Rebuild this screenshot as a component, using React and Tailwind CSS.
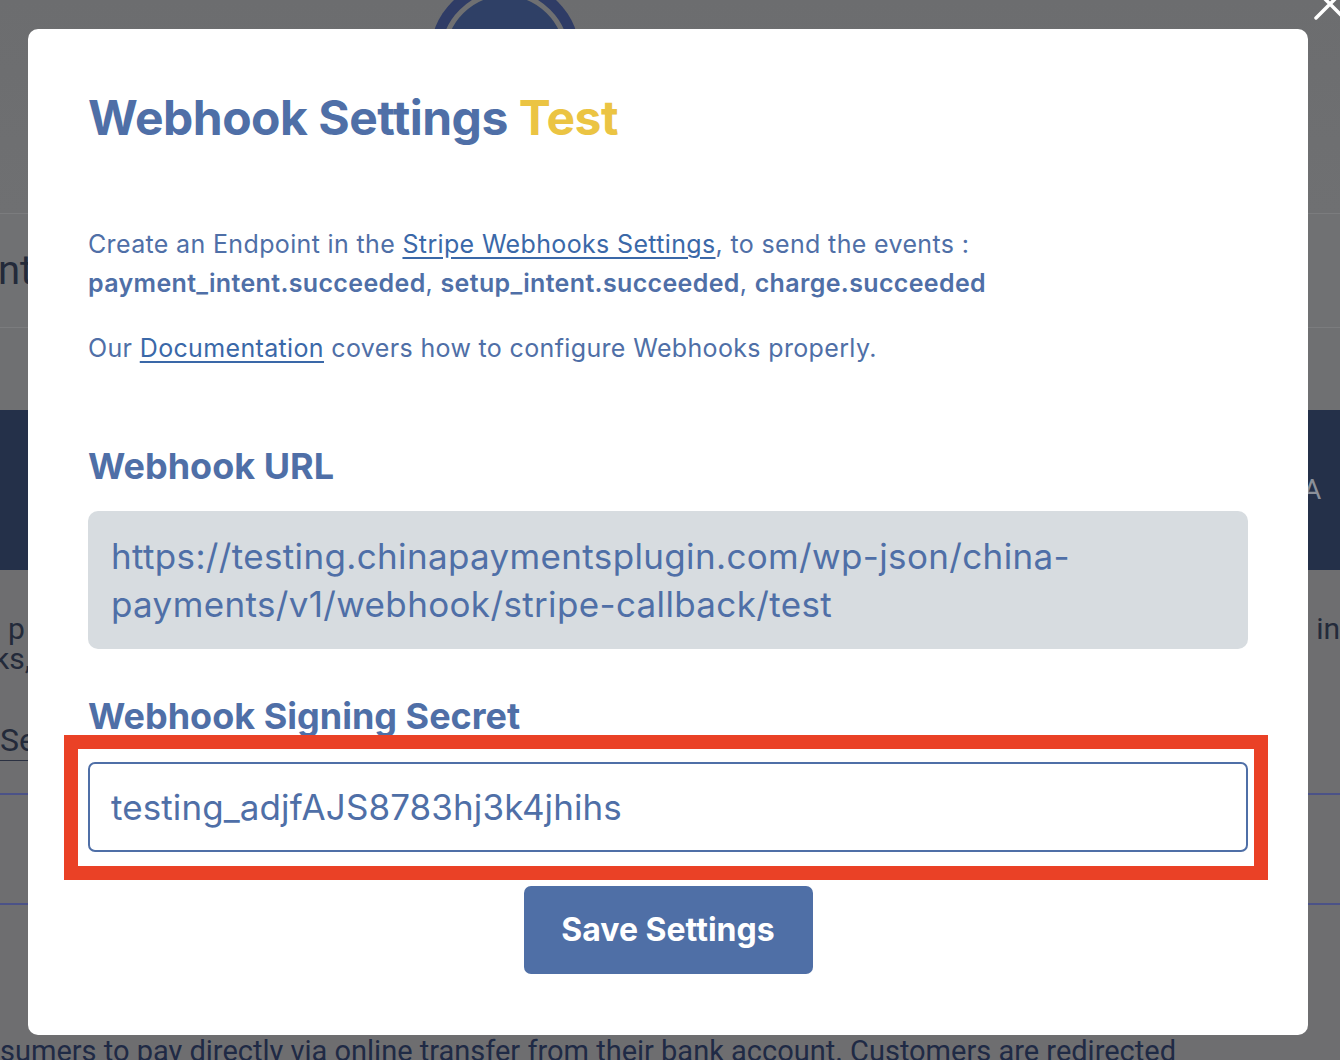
import React from 'react';

const BLUE = 'text-[#4f6fa7]';

function BackgroundPage() {
    return (
        <div className="flex flex-col w-full bg-[#6e6e70] text-[#232a3a]" style={{ fontFamily: 'Roboto, "Liberation Sans", sans-serif' }}>
            {/* Header with logo */}
            <div className="relative h-[214px] bg-gradient-to-b from-[#6c6d6f] to-[#6f7072] border-b border-[#7b7c7e]">
                <div className="absolute left-[430px] -top-[20px] w-[150px] h-[150px] rounded-full bg-[#2f3c66] flex items-center justify-center">
                    <div className="w-[128px] h-[128px] rounded-full border-[5px] border-[#6f7072] bg-[#2f4066]" />
                </div>
            </div>
            <div className="h-[114px] bg-[#707173] border-b border-[#7b7c7e] flex items-center">
                <span className="text-[40px] leading-none -ml-[2px]">nt</span>
            </div>
            <div className="h-[82px] bg-[#6f7072]" />
            {/* Navy band */}
            <div className="h-[160px] bg-[#243049] flex items-center justify-end pr-[18px]">
                <span className="text-[28px] text-[#8b909a] tracking-wide">A</span>
            </div>
            <div className="flex justify-between pt-[44px]">
                <div className="text-[30px]">
                    <div className="pl-[8px] leading-[30px]">p</div>
                    <div className="-ml-[6px] leading-[30px]">ks,</div>
                </div>
                <div className="text-[30px] leading-[30px]">in</div>
            </div>
            <div className="mt-[46px] w-[28px] border-b border-[#2b3142]">
                <span className="text-[32px] leading-[40px]">Se</span>
            </div>
            <div className="mt-[32px] h-[2px] bg-[#4b5288]" />
            <div className="mt-[108px] h-[2px] bg-[#4b5288]" />
            <div className="mt-[130px] whitespace-nowrap text-[29px] leading-[32px] text-[#1f2a45]">
                sumers to pay directly via online transfer from their bank account. Customers are redirected
            </div>
        </div>
    );
}

export default function App() {
    return (
        <div className="relative w-full h-[1060px] overflow-hidden">
            <BackgroundPage />

            {/* Close button of the overlay */}
            <svg className="absolute right-[-8px] top-[-14px] w-[36px] h-[36px]" viewBox="0 0 36 36">
                <path d="M4 4 L32 32 M32 4 L4 32" stroke="#ffffff" strokeWidth="3.5" strokeLinecap="round" />
            </svg>

            {/* Modal */}
            <div className="absolute left-[28px] top-[29px] w-[1280px] h-[1006px] bg-white rounded-[10px] px-[60px] pt-[60px] pb-[61px] flex flex-col" style={{ fontFamily: 'Inter, "Liberation Sans", sans-serif' }}>
                <h1 className={`text-[48px] leading-[58px] font-bold tracking-[-0.5px] ${BLUE}`}>
                    Webhook Settings <span className="text-[#ebc443]">Test</span>
                </h1>

                <p className={`mt-[78px] text-[25px] leading-[39px] tracking-[0.35px] ${BLUE}`}>
                    Create an Endpoint in the <a href="#" className="underline underline-offset-[4px] text-[#3a68a8]">Stripe Webhooks Settings</a>, to send the events :
                    <br />
                    <b className="font-semibold">payment_intent.succeeded</b>, <b className="font-semibold">setup_intent.succeeded</b>, <b className="font-semibold">charge.succeeded</b>
                </p>

                <p className={`mt-[26px] text-[25px] leading-[39px] tracking-[0.35px] ${BLUE}`}>
                    Our <a href="#" className="underline underline-offset-[4px] text-[#3a68a8]">Documentation</a> covers how to configure Webhooks properly.
                </p>

                <h2 className={`mt-[76px] text-[36px] leading-[44px] font-bold ${BLUE}`}>Webhook URL</h2>
                <div className={`mt-[23px] bg-[#d7dce0] rounded-[10px] pl-[23px] pr-[20px] py-[21px] text-[35px] leading-[48px] tracking-[0.35px] ${BLUE}`}>
                    https://testing.chinapaymentsplugin.com/wp-json/china-
                    <br />
                    payments/v1/webhook/stripe-callback/test
                </div>

                <h2 className={`mt-[45px] text-[36px] leading-[44px] font-bold ${BLUE}`}>Webhook Signing Secret</h2>
                <div className="relative mt-[24px]">
                    <input
                        readOnly
                        value="testing_adjfAJS8783hj3k4jhihs"
                        className={`w-full h-[90px] border-2 border-[#4f6fa7] rounded-[7px] pl-[21px] text-[35px] tracking-[0.1px] outline-none ${BLUE}`}
                    />
                    {/* Red annotation frame */}
                    <div className="absolute left-[-24px] right-[-20px] top-[-27px] bottom-[-28px] border-[14px] border-[#ea4126] pointer-events-none" />
                </div>

                <div className="mt-[34px] flex justify-center">
                    <button className="w-[289px] h-[88px] bg-[#4f6fa6] rounded-[7px] text-white text-[32px] font-bold">
                        Save Settings
                    </button>
                </div>
            </div>
        </div>
    );
}
